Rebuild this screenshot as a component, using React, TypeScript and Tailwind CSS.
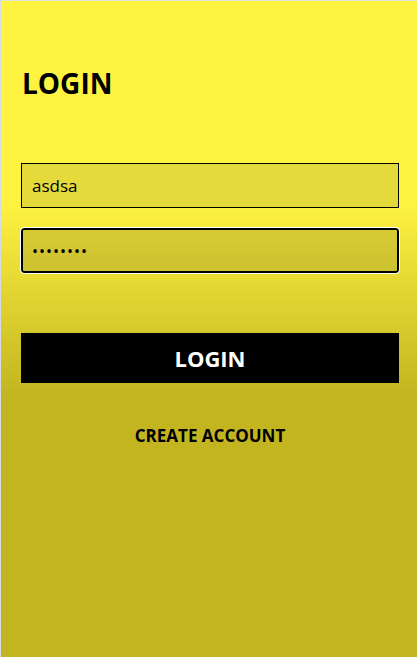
import React from "react";

export default function App() {
  return (
    <div
      className="h-[657px] w-[417px] border-l border-t border-l-[#d5dae3] border-t-[#e2e2e2] bg-[linear-gradient(to_bottom,#fff342_30%,#c3b520_60%)] pl-5 pr-[18px] pt-[64px]"
      style={{ fontFamily: '"Open Sans", "Noto Sans", sans-serif' }}
    >
      <h1 className="text-[28px] font-bold leading-[36px] text-black pl-px">LOGIN</h1>
      <div className="mt-[62px] flex flex-col">
        <div className="h-[45px] border border-black bg-black/10 px-[10px] flex items-center text-[17px] text-black">
          asdsa
        </div>
        <div className="mt-5 h-[45px] rounded-[3px] border-2 border-black bg-black/[0.12] px-[9px] flex items-center text-[16px] text-black outline outline-1 outline-white tracking-[1px]">
          ••••••••
        </div>
      </div>
      <button className="mt-[60px] h-[50px] w-full bg-black text-white text-[22px] font-bold">LOGIN</button>
      <div className="mt-[40px] text-center text-[17px] font-bold text-black">CREATE ACCOUNT</div>
    </div>
  );
}
